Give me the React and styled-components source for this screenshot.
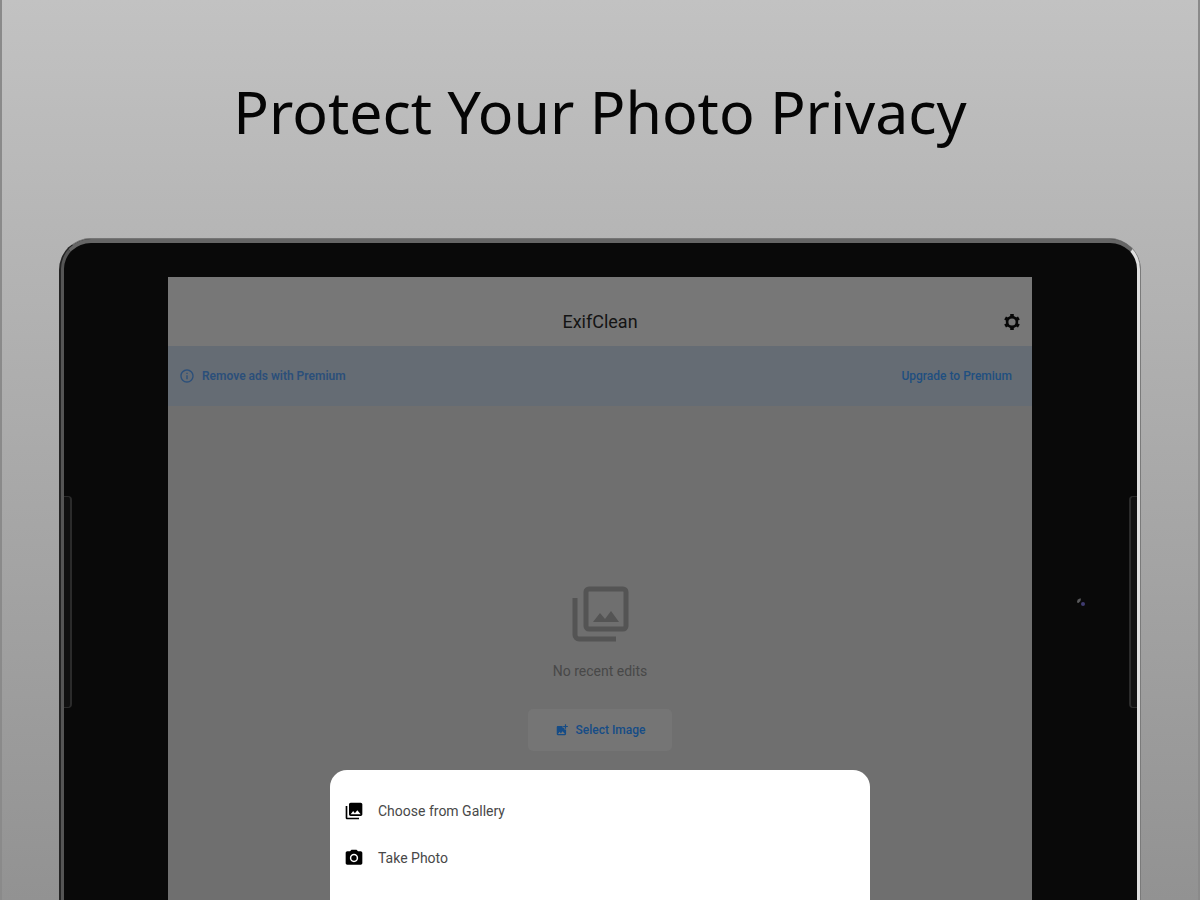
import React from "react";
import styled, { createGlobalStyle } from "styled-components";
import { MdPhotoLibrary, MdPhotoCamera, MdOutlineInfo, MdAddPhotoAlternate } from "react-icons/md";

const GlobalStyle = createGlobalStyle`
  * {
    box-sizing: border-box;
  }
  body {
    margin: 0;
    font-family: Roboto, sans-serif;
  }
  button {
    font-family: inherit;
    border: none;
    background: none;
    padding: 0;
    cursor: pointer;
  }
`;
const Page = styled.div`
  height: 100vh;
  min-height: 800px;
  display: flex;
  flex-direction: column;
  overflow: hidden;
  padding: 0 57px;
  border-left: 2px solid #8a8a8a;
  border-right: 2px solid #8a8a8a;
  background: linear-gradient(#c2c2c2, #b5b5b5 27%, #929292);
`;
const Headline = styled.h1`
  margin: 0;
  padding: 71px 0 87px;
  font-family: "Noto Sans", sans-serif;
  font-size: 59px;
  line-height: 80px;
  font-weight: 400;
  text-align: center;
  color: #050505;
`;
const Frame = styled.main`
  flex: 1;
  display: flex;
  border: 2px solid #242424;
  border-top: 1px solid #757575;
  border-right: 1px solid #7a7a7a;
  border-bottom: none;
  border-radius: 32px 32px 0 0;
  background: #242424;
`;
const Bezel = styled.div`
  flex: 1;
  display: flex;
  border: 3px solid #555555;
  border-top: 4px solid #666666;
  border-right-color: #dedede;
  border-bottom: none;
  border-radius: 30px 30px 0 0;
  background: #090909;
`;
const Side = styled.div`
  flex: 0 0 ${(props) => (props.$right ? "105px" : "104px")};
  display: flex;
  flex-direction: ${(props) => (props.$right ? "row-reverse" : "row")};
  align-items: center;
  align-self: flex-start;
  gap: 43px;
  padding-top: 253px;
`;
const Speaker = styled.div`
  width: 8px;
  height: 212px;
  background: #101010;
  border: 0 solid #2b2b2b;
  border-width: ${(props) => (props.$right ? "1px 0 1px 2px" : "1px 2px 1px 0")};
  border-radius: ${(props) => (props.$right ? "4px 0 0 4px" : "0 4px 4px 0")};
`;
const Screen = styled.div`
  position: relative;
  flex: 1;
  display: flex;
  flex-direction: column;
  margin-top: 34px;
  background: #6f6f6f;
`;
const AppBar = styled.header`
  display: grid;
  grid-template-columns: 1fr auto 1fr;
  align-items: center;
  height: 69px;
  padding: 20px 10px 0;
  background: #777777;
`;
const AppTitle = styled.h2`
  grid-column: 2;
  margin: 0;
  font-size: 18px;
  line-height: 24px;
  font-weight: 400;
  color: #141414;
`;
const SettingsButton = styled.button`
  display: flex;
  justify-self: end;
  color: #080808;
`;
const Banner = styled.section`
  display: flex;
  align-items: center;
  gap: 7px;
  height: 60px;
  padding: 0 20px 0 11px;
  background: #656c74;
  color: #2b4f7a;
  font-size: 12px;
  line-height: 16px;
`;
const BannerText = styled.span`
  flex: 1;
  font-weight: 600;
`;
const UpgradeLink = styled.a`
  color: #1f4f80;
  font-weight: 500;
  text-decoration: none;
`;
const Empty = styled.section`
  display: flex;
  flex-direction: column;
  align-items: center;
  padding-top: 180px;
`;
const EmptyText = styled.p`
  margin: 18px 0 29px;
  font-size: 14px;
  line-height: 18px;
  color: #484848;
`;
const SelectButton = styled.button`
  display: flex;
  align-items: center;
  justify-content: center;
  gap: 7px;
  width: 144px;
  height: 42px;
  border-radius: 5px;
  background: #757575;
  color: #164c86;
  font-size: 12px;
  font-weight: 500;
`;
const Sheet = styled.div`
  position: absolute;
  top: 493px;
  bottom: 0;
  left: 50%;
  transform: translateX(-50%);
  width: 540px;
  max-width: 100%;
  display: flex;
  flex-direction: column;
  padding-top: 17px;
  border-radius: 17px 17px 0 0;
  background: #ffffff;
`;
const SheetItem = styled.button`
  display: flex;
  align-items: center;
  gap: 14px;
  height: 47px;
  padding: 0 14px;
  color: #000000;
`;
const SheetLabel = styled.span`
  font-size: 14px;
  color: #484848;
`;

const GearIcon = () => (
  <svg width="20" height="20" viewBox="0 0 20 20" fill="none" aria-hidden="true">
    <circle cx="10" cy="10" r="4.9" stroke="currentColor" strokeWidth="2.6" />
    <path
      d="M10 2v3M10 15v3M3.100 6l2.600 1.500M14.300 12.500l2.600 1.500M3.100 14l2.600-1.500M14.300 7.500L16.900 6"
      stroke="currentColor"
      strokeWidth="3.6"
    />
  </svg>
);

const PhotosIcon = () => (
  <svg width="58" height="58" viewBox="0 0 58 58" fill="none" aria-hidden="true">
    <path
      d="M4 12v37a4 4 0 0 0 4 4h37"
      stroke="#545454"
      strokeWidth="5"
    />
    <rect x="15" y="3" width="40" height="40" rx="3" stroke="#545454" strokeWidth="5" />
    <path d="M22 36l7-9 5 6 6-8 8 11z" fill="#545454" />
  </svg>
);

const CameraIcon = () => (
  <svg width="10" height="10" viewBox="0 0 10 10" aria-hidden="true">
    <path d="M1 5.500a3.500 3.500 0 0 1 4-4L4.500 4 2.500 6z" fill="#5a5a5c" />
    <circle cx="7" cy="7" r="2" fill="#3f3b70" />
  </svg>
);

export default function App() {
  return (
    <>
      <GlobalStyle />
      <Page>
        <Headline>Protect Your Photo Privacy</Headline>
        <Frame>
          <Bezel>
            <Side>
              <Speaker />
            </Side>
            <Screen>
              <AppBar>
                <AppTitle>ExifClean</AppTitle>
                <SettingsButton aria-label="Settings">
                  <GearIcon />
                </SettingsButton>
              </AppBar>
              <Banner>
                <MdOutlineInfo size={16} />
                <BannerText>Remove ads with Premium</BannerText>
                <UpgradeLink href="#premium">Upgrade to Premium</UpgradeLink>
              </Banner>
              <Empty>
                <PhotosIcon />
                <EmptyText>No recent edits</EmptyText>
                <SelectButton>
                  <MdAddPhotoAlternate size={14} />
                  Select Image
                </SelectButton>
              </Empty>
              <Sheet>
                <SheetItem>
                  <MdPhotoLibrary size={20} />
                  <SheetLabel>Choose from Gallery</SheetLabel>
                </SheetItem>
                <SheetItem>
                  <MdPhotoCamera size={20} />
                  <SheetLabel>Take Photo</SheetLabel>
                </SheetItem>
              </Sheet>
            </Screen>
            <Side $right>
              <Speaker $right />
              <CameraIcon />
            </Side>
          </Bezel>
        </Frame>
      </Page>
    </>
  );
}
